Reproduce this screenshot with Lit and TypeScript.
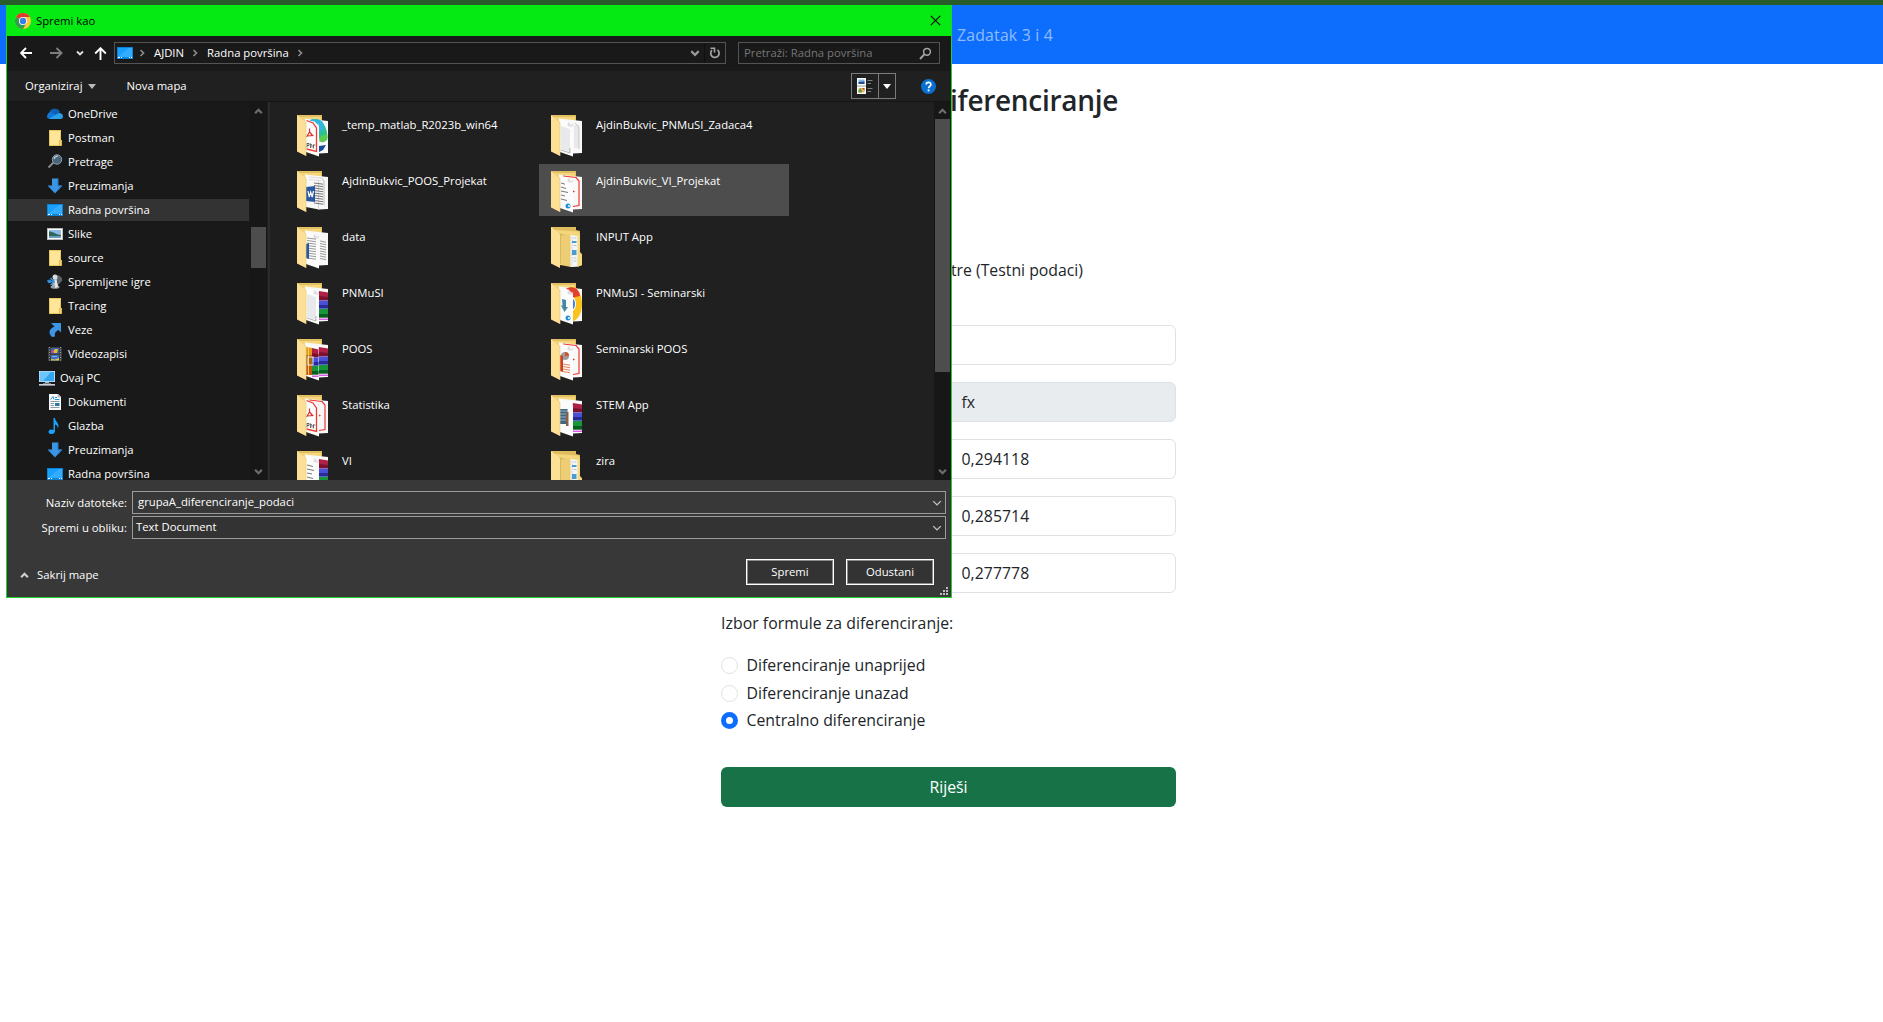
import { LitElement, html, svg, css, TemplateResult, SVGTemplateResult } from "lit";
import { customElement, property } from "lit/decorators.js";
import { classMap } from "lit/directives/class-map.js";

/* ---------- 16px icons of the navigation tree ---------- */
const treeIcons: Record<string, SVGTemplateResult> = {
  cloud: svg`<path d="M2 8C2 5 4.500 2.500 7.500 2.800C9 2.500 12 3 13 6L9 9Z" fill="#0f5fb4"/><path d="M0 10.500C0 7.500 2.500 6 5 6.400L12 11L5 13H3C1 13 0 12 0 10.500Z" fill="#1277d4"/><path d="M2.500 12.600L11 7.200C13.500 6.500 16 8 16 10.500C16 12 15 13 13.500 13H3.500Z" fill="#28a0ea"/>`,
  folder: svg`<path d="M2 0H14V10H15V15.500H2Z" fill="#fbe08a"/><path d="M2.500 .5H13.500V10.500L12.500 11V15.500H2.500Z" fill="#ffe597" stroke="#e9c75f"/><path d="M12.500 15.500V10.500H14.500V15.500Z" fill="#f7d772" stroke="#dfb84c"/>`,
  search: svg`<path d="M1.500 13.500L7 8" stroke="#8d8d8d" stroke-width="1.800"/><circle cx="10" cy="5.500" r="4.700" fill="#4a6478" stroke="#8ba0ae"/><path d="M7 5C7.500 3 9 2 11 2.200" stroke="#a9c3d4" stroke-width="1.500" fill="none"/>`,
  down: svg`<path d="M5 .5H11V7.500H15.500L8 15.500L.5 7.500H5Z" fill="#3a95e4"/><path d="M11 .5V8H14.500L8 15" fill="none" stroke="#2277c9"/>`,
  desktop: svg`<rect y="2" width="16" height="12" fill="#0a84d8"/><rect x="1" y="3" width="14" height="9" fill="#18a0fb"/><path d="M1 12L12 3H15V12Z" fill="#32acff"/><path d="M1 12.500H3M4 12.500H5M12 12.500H13M14 12.500H15" stroke="#fff"/>`,
  picture: svg`<rect y="2" width="16" height="12" fill="#b9b9b9"/><rect x="1" y="3" width="14" height="10" fill="#fff"/><rect x="2" y="4" width="12" height="8" fill="#8db9e6"/><path d="M2 5.500C6 5 8 8.500 14 9V12H2Z" fill="#2f6659"/><path d="M2 10H14V12H2Z" fill="#6b9dbb"/>`,
  game: svg`<path d="M9 1C13 1 16 4 15 7L11 11Z" fill="#5c6266"/><circle cx="8" cy="3" r="2.500" fill="#d8dddf"/><path d="M6.500 5H9.500L11 12H5Z" fill="#b3babd"/><ellipse cx="8" cy="13" rx="4.500" ry="1.800" fill="#98a1a4"/><path d="M8 6V14L11 13L9.500 5Z" fill="#e4e7e8"/><path d="M0 6L4 5.500L4 9L1 9Z" fill="#2c82cc"/><path d="M1 7.500H6M3.500 4L7 7.500L3.500 11" stroke="#3991d8" stroke-width="1.500" fill="none"/>`,
  link: svg`<path d="M4 1H14V10.500L11.500 8C8.500 9.500 7.500 11 8 14.500L5 15C1 11 2 7 7.500 4.500Z" fill="#3c96e6"/>`,
  film: svg`<path d="M1 1H15V15H1Z" fill="#3e3e3e"/><path d="M2.500 1V15M13.500 1V15" stroke="#9a9a9a" stroke-dasharray="1 1.500"/><rect x="4" y="2" width="8" height="5.500" fill="#3d62b5"/><path d="M5 7L8 3L11 3L10 7Z" fill="#e0c12e"/><path d="M4 5L6 4L7 7H4Z" fill="#c5479a"/><rect x="4" y="9" width="8" height="5.500" fill="#3f70c8"/><path d="M4 13L8 13.500L12 12V14.500H4Z" fill="#e1c64a"/><path d="M5 10H10V11H5Z" fill="#7cafdf"/>`,
  pc: svg`<rect y="1" width="16" height="11" fill="#d0e6f4"/><rect x=".8" y="1.800" width="14.400" height="9.400" fill="#34a6ef"/><path d="M.8 1.800H12L4 11.200H.8Z" fill="#6cc5fb"/><rect x="6" y="12" width="4" height="1" fill="#9fb5c3"/><rect x="4" y="13" width="8" height="1" fill="#6d7c86"/><rect x="0" y="14" width="16" height="1.600" fill="#c9d2da"/>`,
  doc: svg`<path d="M2 0H11L14 3V16H2Z" fill="#fafafa"/><path d="M11 0V3H14" fill="#c9c9c9" stroke="#999" stroke-width=".6"/><path d="M3.500 5.500L6 2.500L7 5.500M8 3.500H10M8 5.500H12.500" stroke="#2292dc" fill="none"/><path d="M3.500 7.500H12.500M3.500 9.500H7M3.500 11.500H7M3.500 13.500H12.500" stroke="#8d9fac"/><rect x="8" y="9" width="4.500" height="3" fill="#2e7aa6"/>`,
  note: svg`<path d="M6.500 0H8C8 4 13 4.500 11 10.500C10.800 7.500 9 6.500 8 6.500V13C8 17 1 17 1.500 13.500C2 11 5 11 6.500 12Z" fill="#18a2fb"/>`,
};

/* ---------- large folder thumbnails, 31 x 42 ---------- */
const books = (x: number, y: number, w: number): SVGTemplateResult => svg`
  <path d="M${x} ${y}l${w} 1.500v8h-${w}z" fill="#b01f45"/><path d="M${x} ${y + 5}l${w} 1v3h-${w}z" fill="#7a1230"/>
  <path d="M${x} ${y + 9.500}h${w}v8h-${w}z" fill="#4a50d6"/><path d="M${x} ${y + 14}h${w}v3.500h-${w}z" fill="#272b96"/>
  <path d="M${x} ${y + 18}h${w}v8.500h-${w}z" fill="#17973a"/><path d="M${x} ${y + 23}h${w}v3.500h-${w}z" fill="#0b5c20"/>
  <path d="M${x} ${y + 27.500}h${w}v1.500h-${w}z" fill="#e05be8"/>`;
const lines = (x: number, y: number, w: number, n: number, color: string): SVGTemplateResult =>
  svg`${Array.from({ length: n }, (_, i) => svg`<path d="M${x} ${y + i * 2.5}l${w} 1.200" stroke=${color} stroke-width="1"/>`)}`;
const backRed = svg`<path d="M12 5L25 6.500L28 10V34.500L22 35.500" fill="none" stroke="#ee3a33" stroke-width="1.200"/><path d="M22 19.500l2 1-2 1z" fill="#d92d2a"/>`;
const fold = svg`<path d="M17 6.500L22 12L16.500 11Z" fill="#ddd"/>`;
const pdfFront = svg`<path d="M9.500 5.500L16 8L19.500 13V36.500L9.500 34" fill="none" stroke="#ee3a33" stroke-width="1.300"/><path d="M12.500 13.500V17L9.500 22M12.500 17L16 21M10 21L16.500 20.500" stroke="#df3029" stroke-width="1.200" fill="none"/><path d="M10 28v4.500M10 28.500h2v2h-2M13.500 28.500v4.500M13.500 29l1.500 1v2.500M16.500 29.500v4M16.500 30h1.800" stroke="#444" stroke-width=".8" fill="none"/>`;

interface Thumb { back: SVGTemplateResult; front: SVGTemplateResult; }
const thumbs: Record<string, Thumb> = {
  edge: { back: svg`<path d="M13 5C22 1 31 9 30.500 24C27 29 22 27 22 22Z" fill="#2fc08e"/><path d="M13 5C22 2 28 6 27 14L22 18Z" fill="#32b6de"/><path d="M24 21C28 21 30 16 30.500 22C29 28 24 28 22 26Z" fill="#5ecb4d"/><path d="M22 31L29 30L26 35L22 37Z" fill="#154c9c"/>`, front: pdfFront },
  word: { back: svg``, front: svg`${fold}` },
  data: { back: lines(23, 14, 6, 8, "#999"), front: svg`${fold}${lines(10, 11, 9, 9, "#999")}<path d="M9 17L12 16V32L9 31Z" fill="#2957a4"/>` },
  plain: { back: svg`<path d="M23 10H28V33H23Z" fill="#e6e8ea"/><path d="M24 8L28 12V34" fill="none" stroke="#bbb" stroke-width=".8"/>`, front: svg`${fold}<path d="M10 11L19 14V37L10 34Z" fill="#e8e9ea"/><path d="M10 35L19 38V33" fill="none" stroke="#999" stroke-width=".7"/>` },
  vi: { back: backRed, front: svg`${fold}${lines(10, 12, 4, 1, "#777")}<path d="M10 16l5 1.500M10 20l7 1.500M10 24l4 1M10 28l6 1.500" stroke="#777"/><circle cx="17" cy="35" r="2.500" fill="#2490d8"/><circle cx="18" cy="35" r="1" fill="#fff"/>` },
  pnmusi: { back: books(22, 8, 9), front: svg`${fold}<path d="M10 11L19 14V37L10 34Z" fill="#e8e9ea"/><path d="M10 35L19 38V33" fill="none" stroke="#999" stroke-width=".7"/>` },
  chrome: { back: svg`<ellipse cx="21" cy="21" rx="10" ry="17" fill="#fcc21b"/><path d="M12 9C18 1 28 4 29 13L20 15Z" fill="#e2412f"/><ellipse cx="21" cy="21" rx="4" ry="7" fill="#fff"/><ellipse cx="21" cy="21" rx="3" ry="5.500" fill="#3c7fe6"/>`, front: svg`${fold}<path d="M11 16L15 17V24H17L13.500 29L10 22.500H11.500Z" fill="#4588a3"/><circle cx="17" cy="35" r="2.500" fill="#2490d8"/><circle cx="18" cy="35" r="1" fill="#fff"/>` },
  poos: { back: books(22, 8, 9), front: svg`${books(15, 9, 6.5)}<path d="M9 8L15 9V17L9 16Z" fill="#e39a16"/><path d="M9 16H15V26H9Z" fill="#b3670c"/><path d="M9 26H15V36H9Z" fill="#c3590f"/><path d="M11.500 8V36" stroke="#f6c65a" stroke-width="1"/><rect x="11" y="18" width="5" height="8" fill="none" stroke="#eee" stroke-width="1"/>` },
  seminar: { back: backRed, front: svg`${fold}<circle cx="14" cy="17" r="4" fill="#9b9d9f"/><path d="M14 17V13A4 4 0 0 1 18 17Z" fill="#d35232"/><path d="M9 16L12 17V33L9 32Z" fill="#c9421f"/>${lines(12, 25, 7, 4, "#e27f5d")}` },
  pdf: { back: backRed, front: pdfFront },
  stem: { back: books(22, 8, 9), front: svg`<rect x="9" y="14" width="7.500" height="15" fill="#41657e"/><path d="M9 16H16M9 19H16M9 22H16M9 25H16" stroke="#a9c8dc" stroke-width=".8"/><path d="M15 17h2.500v14h-2.500z" fill="#866144"/>` },
  vitext: { back: books(22, 8, 9), front: svg`${fold}<path d="M10 14l6 1.500M10 18l7 1.500M10 22l5 1M10 26l6 1.500" stroke="#777"/>` },
};

const folderThumb = (kind: string): TemplateResult => {
  if (kind === "nested") {
    return html`<svg width="31" height="42" viewBox="0 0 31 42">
      <path d="M0 0H25V3L29 4V25L31 27V38L29 39L20 40L9 38L0 36Z" fill="#dfbc5e"/>
      <path d="M4 3L28 4.500V36L9 38Z" fill="#f5d67c"/>
      <path d="M8 6L15 8V34L9 37Z" fill="#d9b95f"/><path d="M14 7L19.500 8V39.500L10 37.500V9Z" fill="#edcd74"/>
      <path d="M19.500 8L27 9V39.500L19.500 40Z" fill="#f4f6f8"/><path d="M21 10V38" stroke="#b8cbd9" stroke-dasharray="1.500 1"/>
      <path d="M21 14H25.500V16H21ZM21 23H25.500V28H21Z" fill="#4a9bd0"/><path d="M22.500 11H25.500M22.500 18.500H25.500M22.500 31H25.500M22.500 34H25.500" stroke="#b6c4d0"/>
      <path d="M26.500 9L29 6V26L31 28V38L26.500 40Z" fill="#f6d87f"/>
      <path d="M0 0L9 7V41L0 36.500Z" fill="#fce095"/></svg>`;
  }
  const t = thumbs[kind];
  return html`<svg width="31" height="42" viewBox="0 0 31 42">
    <path d="M0 0H25V8H3Z" fill="#e2bf62"/><path d="M2 2L24 2V6H5Z" fill="#f6d67b"/>
    <path d="M8 3.500L31 6V38L22 38.500L9 36Z" fill="#f8f8f8"/>${t.back}
    <path d="M21.500 9V39" stroke="#c9c9c9" stroke-width=".8"/>
    ${kind === "word"
      ? svg`<path d="M24 6.500L27 10V34" fill="none" stroke="#aaa" stroke-width=".8"/><path d="M12 6L24 7M12 8.500L24 9.500" stroke="#ddd"/>${lines(17, 12, 9, 9, "#777")}<path d="M9 16L18 15V31L9 30Z" fill="#2957a4"/><path d="M11 20l1.200 6 1.500-5 1.500 5 1.300-6" stroke="#fff" stroke-width="1.200" fill="none"/>`
      : svg`<path d="M8 5L17.500 6.500L22 11V41.500L9 37Z" fill="#fcfcfc"/>${t.front}`}
    <path d="M0 0L9 7V41L0 36.500Z" fill="#fce095"/><path d="M0 0L9 7V41" fill="none" stroke="#e9cb7b" stroke-width=".7"/></svg>`;
};

/* ---------- small glyphs ---------- */
const chevron = (dir: "up" | "down" | "right", color: string, size = 8, weight = 1.6): TemplateResult => {
  const d = { up: "M1 5.500L4 2.500L7 5.500", down: "M1 2.500L4 5.500L7 2.500", right: "M2.500 1L5.500 4L2.500 7" }[dir];
  return html`<svg width=${size} height=${size} viewBox="0 0 8 8"><path d=${d} fill="none" stroke=${color} stroke-width=${weight}/></svg>`;
};

const chromeLogo = html`<svg width="16" height="16" viewBox="0 0 16 16">
  <circle cx="8" cy="8" r="8" fill="#fcc934"/><path d="M8 8L1.070 4A8 8 0 0 1 14.930 4H8Z" fill="#e33b2e"/>
  <path d="M8 8L1.070 4A8 8 0 0 0 8 16L11.460 10Z" fill="#2f9e4f"/>
  <circle cx="8" cy="8" r="4.100" fill="#fff"/><circle cx="8" cy="8" r="3.200" fill="#3b7de9"/></svg>`;

interface TreeItem { label: string; icon: string; root?: boolean; selected?: boolean; }
const tree: TreeItem[] = [
  { label: "OneDrive", icon: "cloud" },
  { label: "Postman", icon: "folder" },
  { label: "Pretrage", icon: "search" },
  { label: "Preuzimanja", icon: "down" },
  { label: "Radna površina", icon: "desktop", selected: true },
  { label: "Slike", icon: "picture" },
  { label: "source", icon: "folder" },
  { label: "Spremljene igre", icon: "game" },
  { label: "Tracing", icon: "folder" },
  { label: "Veze", icon: "link" },
  { label: "Videozapisi", icon: "film" },
  { label: "Ovaj PC", icon: "pc", root: true },
  { label: "Dokumenti", icon: "doc" },
  { label: "Glazba", icon: "note" },
  { label: "Preuzimanja", icon: "down" },
  { label: "Radna površina", icon: "desktop" },
];

interface FileItem { label: string; thumb: string; hover?: boolean; }
const files: FileItem[] = [
  { label: "_temp_matlab_R2023b_win64", thumb: "edge" },
  { label: "AjdinBukvic_PNMuSI_Zadaca4", thumb: "plain" },
  { label: "AjdinBukvic_POOS_Projekat", thumb: "word" },
  { label: "AjdinBukvic_VI_Projekat", thumb: "vi", hover: true },
  { label: "data", thumb: "data" },
  { label: "INPUT App", thumb: "nested" },
  { label: "PNMuSI", thumb: "pnmusi" },
  { label: "PNMuSI - Seminarski", thumb: "chrome" },
  { label: "POOS", thumb: "poos" },
  { label: "Seminarski POOS", thumb: "seminar" },
  { label: "Statistika", thumb: "pdf" },
  { label: "STEM App", thumb: "stem" },
  { label: "VI", thumb: "vitext" },
  { label: "zira", thumb: "nested" },
];

@customElement("scroll-bar")
class ScrollBar extends LitElement {
  @property({ type: Number }) before = 0;
  @property({ type: Number }) size = 0;
  static styles = css`
    :host { display: flex; flex-direction: column; align-items: center; width: 17px; height: 378px; background: #171717; flex: none; }
    .arrow { height: 17px; display: flex; align-items: center; flex: none; }
    .top { padding-top: 1px; height: 16px; }
    .thumb { width: 15px; background: #4d4d4d; flex: none; }
    .rest { flex: 1; }
  `;
  render() {
    return html`<div class="arrow top">${chevron("up", "#6e6e6e", 9, 2)}</div>
      <div style="height:${this.before}px"></div>
      <div class="thumb" style="height:${this.size}px"></div>
      <div class="rest"></div>
      <div class="arrow">${chevron("down", "#6e6e6e", 9, 2)}</div>`;
  }
}

@customElement("save-dialog")
class SaveDialog extends LitElement {
  static styles = css`
    :host { display: block; box-sizing: border-box; width: 946px; height: 593px; border: 1px solid #1fd32a; border-top: 0; background: #383838; color: #fff;
      font: 11.300px/16px "Open Sans", "Noto Sans", sans-serif; overflow: hidden; white-space: nowrap; }
    svg { display: block; flex: none; }
    .title { height: 31px; background: #06ea14; color: #000; display: flex; align-items: center; padding: 0 10px 0 8px; box-sizing: border-box; }
    .title span { margin-left: 5px; flex: 1; }
    .nav { height: 35px; background: #191919; display: flex; align-items: center; box-sizing: border-box; padding: 0 12px 1px 12px; }
    .nav > * { flex: none; }
    .back { margin-left: 1px; } .fwd { margin-left: 18px; } .recent { margin-left: 13px; } .up { margin-left: 10px; }
    .address { margin-left: 7px; width: 612px; height: 22px; box-sizing: border-box; border: 1px solid #535353; display: flex; align-items: center; padding-left: 2px; }
    .address .gap1 { margin: 0 8px 0 5px; } .address .gap2 { margin: 0 8px 0 7px; }
    .address span, .find span { margin-bottom: 1px; }
    .spacer { flex: 1; }
    .drop { padding-right: 4px; } .reload { border-left: 1px solid #101010; height: 20px; display: flex; align-items: center; padding: 0 4px; }
    .find { margin-left: 12px; width: 202px; height: 22px; box-sizing: border-box; border: 1px solid #535353; display: flex; align-items: center; justify-content: space-between; padding: 0 7px 0 5px; color: #767676; }
    .tools { height: 31px; box-sizing: border-box; background: #202020; border-bottom: 1px solid #141414; display: flex; align-items: center; padding: 0 15px 0 18px; }
    .tri { width: 0; border: 4px solid transparent; border-top: 5px solid #b9b9b9; border-bottom: 0; margin-left: 5px; }
    .new { margin-left: 31px; }
    .view { display: flex; height: 26px; width: 45px; box-sizing: border-box; border: 1px solid #7b7b7b; margin-right: 25px; }
    .view > div { display: flex; align-items: center; justify-content: center; }
    .mode { width: 26px; border-right: 1px solid #7b7b7b; } .more { flex: 1; } .more .tri { margin: 0; border-top-color: #fff; }
    .body { display: flex; height: 378px; overflow: hidden; background: #202020; }
    .tree { width: 243px; background: #191919; overflow: hidden; flex: none; }
    .node { height: 24px; display: flex; align-items: center; }
    .inner { height: 22px; width: 241px; margin-left: 1px; display: flex; align-items: center; padding-left: 39px; box-sizing: border-box; gap: 5px; }
    .inner.root { padding-left: 31px; }
    .inner.selected { background: #333; }
    .divider { width: 2px; background: #2b2b2b; margin-left: 1px; flex: none; }
    .files { flex: 1; display: grid; grid-template-columns: 250px 250px; column-gap: 4px; grid-auto-rows: 52px; row-gap: 4px; padding: 6px 0 0 15px; overflow: hidden; }
    .file { display: flex; padding: 7px 0 0 12px; box-sizing: border-box; gap: 14px; }
    .file.hover { background: #4d4d4d; }
    .file span { margin-top: 2px; }
    .foot { display: grid; grid-template-columns: 120px 814px; column-gap: 5px; row-gap: 2px; padding-top: 11px; align-items: center; }
    .foot label { text-align: right; }
    .combo { height: 23px; box-sizing: border-box; border: 1px solid #9b9b9b; background: #383838; display: flex; align-items: center; justify-content: space-between; padding: 0 3px 0 5px; }
    .combo span { margin-bottom: 1px; }
    .combo.type { background: #333; padding: 0 3px 0 3px; }
    .actions { display: flex; align-items: flex-start; padding: 20px 17px 0 13px; }
    .hide { display: flex; align-items: center; gap: 8px; flex: 1; margin-top: 8px; }
    .btn { width: 88px; height: 26px; box-sizing: border-box; border: 1px solid #fff; outline: 1px solid #8b8b8b; outline-offset: -2px; background: #333; display: flex; align-items: center; justify-content: center; margin-left: 12px; padding-bottom: 1px; }
    .grip { display: flex; justify-content: flex-end; padding: 2px 3px 0 0; }
  `;

  private node(i: TreeItem) {
    return html`<div class="node"><div class=${classMap({ inner: true, root: !!i.root, selected: !!i.selected })}>
      <svg width="16" height="16" viewBox="0 0 16 16">${treeIcons[i.icon]}</svg><span>${i.label}</span></div></div>`;
  }

  render() {
    return html`
      <div class="title">${chromeLogo}<span>Spremi kao</span>
        <svg width="11" height="11" viewBox="0 0 11 11"><path d="M.8 .8L10.200 10.200M10.200 .8L.8 10.200" stroke="#000" stroke-width="1.100"/></svg></div>
      <div class="nav">
        <svg class="back" width="12" height="12" viewBox="0 0 12 12"><path d="M12 6H1.500M6 1L1 6L6 11" fill="none" stroke="#fff" stroke-width="1.900"/></svg>
        <svg class="fwd" width="13" height="12" viewBox="0 0 13 12"><path d="M0 6H11M6.500 1L11.500 6L6.500 11" fill="none" stroke="#7d7d7d" stroke-width="1.900"/></svg>
        <div class="recent">${chevron("down", "#e0e0e0", 8, 1.9)}</div>
        <svg class="up" width="13" height="13" viewBox="0 0 13 13"><path d="M6.500 13V1.500M1.200 6.500L6.500 1.200L11.800 6.500" fill="none" stroke="#fff" stroke-width="1.900"/></svg>
        <div class="address">
          <svg width="16" height="16" viewBox="0 0 16 16">${treeIcons.desktop}</svg>
          <div class="gap1">${chevron("right", "#8a8a8a", 8, 1.7)}</div><span>AJDIN</span>
          <div class="gap2">${chevron("right", "#8a8a8a", 8, 1.7)}</div><span>Radna površina</span>
          <div class="gap2">${chevron("right", "#8a8a8a", 8, 1.7)}</div>
          <div class="spacer"></div>
          <div class="drop">${chevron("down", "#9a9a9a", 10, 1.7)}</div>
          <div class="reload"><svg width="12" height="12" viewBox="0 0 12 12"><path d="M3 3.200A4.200 4.200 0 1 0 8.500 2.900" fill="none" stroke="#a5a5a5" stroke-width="1.700"/><path d="M1.500 1.300H5.500V5.500" fill="none" stroke="#a5a5a5" stroke-width="1.600"/></svg></div>
        </div>
        <div class="find"><span>Pretraži: Radna površina</span>
          <svg width="13" height="13" viewBox="0 0 13 13"><circle cx="8" cy="4.800" r="3.400" fill="none" stroke="#a5a5a5" stroke-width="1.500"/><path d="M5.500 7.200L1 12" stroke="#a5a5a5" stroke-width="1.900"/></svg></div>
      </div>
      <div class="tools"><span>Organiziraj</span><div class="tri"></div><span class="new">Nova mapa</span><div class="spacer"></div>
        <div class="view"><div class="mode"><svg width="16" height="16" viewBox="0 0 16 16"><rect x="0" y="0" width="9" height="16" fill="#fff"/><path d="M0 8H9" stroke="#888" stroke-width=".8"/><rect x="1.500" y="1.500" width="6" height="4.500" fill="#7fb2e8"/><path d="M1.500 4L7.500 3.500V6H1.500Z" fill="#2c4e86"/><rect x="1.500" y="10" width="6" height="4.500" fill="#e9b867"/><path d="M1.500 12L4 10L5 14.500H1.500Z" fill="#5fa046"/><path d="M5 10H7.500V13Z" fill="#cf4b2c"/><path d="M10.500 2.500H15.500M10.500 5.500H14M10.500 10.500H15.500M10.500 13.500H14" stroke="#808080"/></svg></div><div class="more"><div class="tri"></div></div></div>
        <svg width="15" height="15" viewBox="0 0 15 15"><circle cx="7.500" cy="7.500" r="7.500" fill="#0a6fd0"/><path d="M5.200 5.600C5.200 2.700 9.900 2.700 9.900 5.500C9.900 7.300 7.600 7.200 7.600 9.300" fill="none" stroke="#fff" stroke-width="1.700"/><rect x="6.700" y="10.500" width="1.800" height="1.800" fill="#fff"/></svg>
      </div>
      <div class="body">
        <div class="tree">${tree.map((i) => this.node(i))}</div>
        <scroll-bar .before=${108} .size=${41}></scroll-bar>
        <div class="divider"></div>
        <div class="files">${files.map((f) => html`<div class=${classMap({ file: true, hover: !!f.hover })}>${folderThumb(f.thumb)}<span>${f.label}</span></div>`)}</div>
        <scroll-bar .before=${0} .size=${253}></scroll-bar>
      </div>
      <div class="foot">
        <label>Naziv datoteke:</label><div class="combo"><span>grupaA_diferenciranje_podaci</span>${chevron("down", "#c5c5c5", 10, 1.1)}</div>
        <label>Spremi u obliku:</label><div class="combo type"><span>Text Document</span>${chevron("down", "#c5c5c5", 10, 1.1)}</div>
      </div>
      <div class="actions"><div class="hide">${chevron("up", "#cfcfcf", 9, 1.9)}<span>Sakrij mape</span></div>
        <div class="btn">Spremi</div><div class="btn">Odustani</div></div>
      <div class="grip"><svg width="8" height="8" viewBox="0 0 8 8" fill="#bdbdbd"><path d="M6 0h2v2h-2zM3 3h2v2h-2zM6 3h2v2h-2zM0 6h2v2h-2zM3 6h2v2h-2zM6 6h2v2h-2z"/></svg></div>
    `;
  }
}

@customElement("app-root")
class AppRoot extends LitElement {
  static styles = css`
    :host { display: block; position: relative; width: 1883px; height: 1022px; overflow: hidden; background: #fff; color: #212529;
      font: 15.800px/25px "Open Sans", "Noto Sans", sans-serif; white-space: nowrap; }
    .strip { height: 5px; background: #285c2b; }
    .navbar { height: 59px; box-sizing: border-box; background: #0d6efd; display: flex; align-items: center; padding: 2px 0 0 957px; color: rgba(255,255,255,.55); letter-spacing: .2px; }
    .form { width: 455px; margin-left: 721px; display: flex; flex-direction: column; }
    h1 { font-size: 28px; line-height: 36px; font-weight: 600; margin: 18px 58px 0 0; text-align: right; letter-spacing: -.3px; }
    .lead { margin: 140px 93px 0 0; text-align: right; }
    .fields { margin-top: 42px; display: flex; flex-direction: column; gap: 17px; }
    .row { display: grid; grid-template-columns: 1fr 1fr; height: 40px; box-sizing: border-box; border: 1px solid #dee2e6; border-radius: 6px; align-items: center; }
    .row.head { background: #e9ecef; }
    .row span { grid-column: 2; padding-left: 13px; letter-spacing: .05px; }
    .question { margin-top: 18px; letter-spacing: .05px; }
    .radios { margin-top: 17px; display: flex; flex-direction: column; gap: 2.500px; }
    .radio { display: flex; align-items: center; gap: 8.500px; height: 25px; }
    .dot { width: 17px; height: 17px; box-sizing: border-box; border: 1px solid #dee2e6; border-radius: 50%; }
    .dot.on { border: 5px solid #0d6efd; }
    .solve { margin-top: 34px; height: 40px; border-radius: 6px; background: #177347; color: #fff; display: flex; align-items: center; justify-content: center; }
    save-dialog { position: absolute; left: 6px; top: 5px; }
  `;

  private values = ["0,294118", "0,285714", "0,277778"];
  private formulas = ["Diferenciranje unaprijed", "Diferenciranje unazad", "Centralno diferenciranje"];

  render() {
    return html`
      <div class="strip"></div>
      <div class="navbar">Zadatak 3 i 4</div>
      <div class="form">
        <h1>Numeričko diferenciranje</h1>
        <div class="lead">Unesite parametre (Testni podaci)</div>
        <div class="fields">
          <div class="row"></div>
          <div class="row head"><span>fx</span></div>
          ${this.values.map((v) => html`<div class="row"><span>${v}</span></div>`)}
        </div>
        <div class="question">Izbor formule za diferenciranje:</div>
        <div class="radios">${this.formulas.map((f, i) => html`<div class="radio"><div class=${classMap({ dot: true, on: i === 2 })}></div><span>${f}</span></div>`)}</div>
        <div class="solve">Riješi</div>
      </div>
      <save-dialog></save-dialog>`;
  }
}
